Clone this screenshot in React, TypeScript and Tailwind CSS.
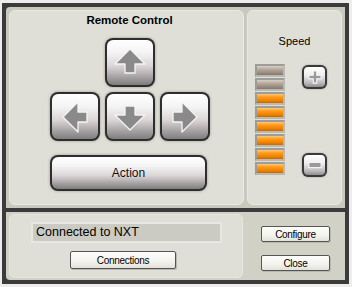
import React from 'react';

const font = { fontFamily: '"Liberation Sans", Arial, sans-serif' };

function Arrow({ rotate }: { rotate: string }) {
  return (
    <svg width="32" height="26" viewBox="-1 -1 32 26" className={rotate}>
      <polygon
        points="15,0 30,15 20,15 20,24 10,24 10,15 0,15"
        fill="#8a8a8a"
        stroke="#f4f4f4"
        strokeWidth="1.3"
        strokeLinejoin="round"
      />
    </svg>
  );
}

function BigButton({ children, className }: { children: React.ReactNode; className: string }) {
  return (
    <div className={`rounded-[8px] bg-[#2e2e2e] p-[2px] shadow-[0_0_3px_#9a9a94] ${className}`}>
      <div className="flex h-full w-full items-center justify-center rounded-[6px] bg-[linear-gradient(180deg,#ffffff_0%,#f4f4f4_28%,#dcd5d6_58%,#a6a2a3_82%,#7f7d7d_100%)]">
        {children}
      </div>
    </div>
  );
}

function SmallIconButton({ children }: { children: React.ReactNode }) {
  return (
    <div className="h-[24px] w-[25px] rounded-[6px] bg-[#3a3a3a] p-[2px] shadow-[0_0_2px_#9a9a94]">
      <div className="flex h-full w-full items-center justify-center rounded-[4px] bg-[linear-gradient(180deg,#ffffff_0%,#eeeeee_40%,#bdb9ba_80%,#8f8d8d_100%)]">
        {children}
      </div>
    </div>
  );
}

function FlatButton({ label, className }: { label: string; className: string }) {
  return (
    <div
      className={`flex items-center justify-center rounded-[2px] border border-[#555] bg-[linear-gradient(180deg,#fdfdfb_0%,#f3f3ee_60%,#e2e2da_100%)] text-[10px] tracking-[-0.3px] text-black shadow-[1px_1px_0_#b8b8ae] ${className}`}
    >
      {label}
    </div>
  );
}

export default function App() {
  const segments = [false, false, true, true, true, true, true, true];

  return (
    <div className="h-[287px] w-[352px] bg-[#ededeb] pl-[2px] pt-[3px]" style={font}>
      <div className="flex h-[281px] w-[347px] flex-col gap-[4px] bg-[#3b3b3b] p-[4px]">
        {/* top region */}
        <div className="flex h-[201px] gap-[3px] rounded-tl-[4px] bg-[#c9c9bd] p-[3px]">
          {/* remote control panel */}
          <div className="flex w-[235px] flex-col rounded-[6px] border border-[#e9e9e3] bg-[#dfdfd7] pt-[3px]">
            <div className="ml-[6px] text-center text-[11.5px] font-bold leading-[13px] text-black">Remote Control</div>
            <div className="ml-[40px] mt-[11px] flex flex-col">
              <BigButton className="ml-[55px] h-[49px] w-[50px]">
                <div className="-mt-[3px]"><Arrow rotate="" /></div>
              </BigButton>
              <div className="mt-[5px] flex gap-[5px]">
                <BigButton className="h-[49px] w-[50px]">
                  <Arrow rotate="-rotate-90" />
                </BigButton>
                <BigButton className="h-[49px] w-[50px]">
                  <div className="mt-[3px]"><Arrow rotate="rotate-180" /></div>
                </BigButton>
                <BigButton className="h-[49px] w-[50px]">
                  <Arrow rotate="rotate-90" />
                </BigButton>
              </div>
              <BigButton className="mt-[14px] h-[36px] w-[157px]">
                <span className="text-[12px] text-[#111]">Action</span>
              </BigButton>
            </div>
          </div>

          {/* speed panel */}
          <div className="flex w-[95px] flex-col rounded-[6px] border border-[#e9e9e3] bg-[#dfdfd7]">
            <div className="mt-[24px] text-center text-[11px] leading-[13px] text-black">Speed</div>
            <div className="mt-[16px] flex">
              <div className="ml-[7px] flex w-[30px] flex-col gap-[1px]">
                {segments.map((on, i) => (
                  <div
                    key={i}
                    className="h-[13px] border-2 border-t-[#9c9c98] border-l-[#9c9c98] border-b-[#b9b9b4] border-r-[#b9b9b4] bg-[#a8a8a4]"
                  >
                    <div
                      className={
                        on
                          ? 'h-full w-full bg-[linear-gradient(180deg,#ffc878_0%,#ff9a1a_35%,#f08400_70%,#c86a00_100%)]'
                          : 'h-full w-full bg-[linear-gradient(180deg,#d8cfc6_0%,#b4a79a_40%,#9a8c80_75%,#857669_100%)]'
                      }
                    />
                  </div>
                ))}
              </div>
              <div className="ml-[17px] flex flex-col">
                <div className="mt-[1px]">
                  <SmallIconButton>
                    <svg width="14" height="14" viewBox="-1 -1 16 16">
                      <polygon
                        points="5,0 9,0 9,5 14,5 14,9 9,9 9,14 5,14 5,9 0,9 0,5 5,5"
                        fill="#9a9a9a"
                        stroke="#fafafa"
                        strokeWidth="1.2"
                      />
                    </svg>
                  </SmallIconButton>
                </div>
                <div className="mt-[64px]">
                  <SmallIconButton>
                    <svg width="14" height="8" viewBox="-1 -1 16 8">
                      <rect x="0" y="0" width="14" height="6" fill="#9a9a9a" stroke="#fafafa" strokeWidth="1.2" />
                    </svg>
                  </SmallIconButton>
                </div>
              </div>
            </div>
          </div>
        </div>

        {/* bottom region */}
        <div className="flex flex-1 rounded-bl-[4px] bg-[#d1d1c5] py-[2px] pl-[3px]">
          <div className="flex w-[234px] flex-col rounded-[5px] border border-[#e6e6e0] bg-[#dfdfd7]">
            <div className="ml-[21px] mt-[7px] flex h-[21px] w-[191px] items-center border-2 border-[#e8e8e2] bg-[#cbcbc3] pl-[3px] text-[12.5px] text-black">
              Connected to NXT
            </div>
            <FlatButton label="Connections" className="ml-[60px] mt-[8px] h-[18px] w-[106px]" />
          </div>
          <div className="ml-[18px] flex flex-col">
            <FlatButton label="Configure" className="mt-[12px] h-[16px] w-[69px]" />
            <FlatButton label="Close" className="mt-[13px] h-[16px] w-[69px]" />
          </div>
        </div>
      </div>
    </div>
  );
}
